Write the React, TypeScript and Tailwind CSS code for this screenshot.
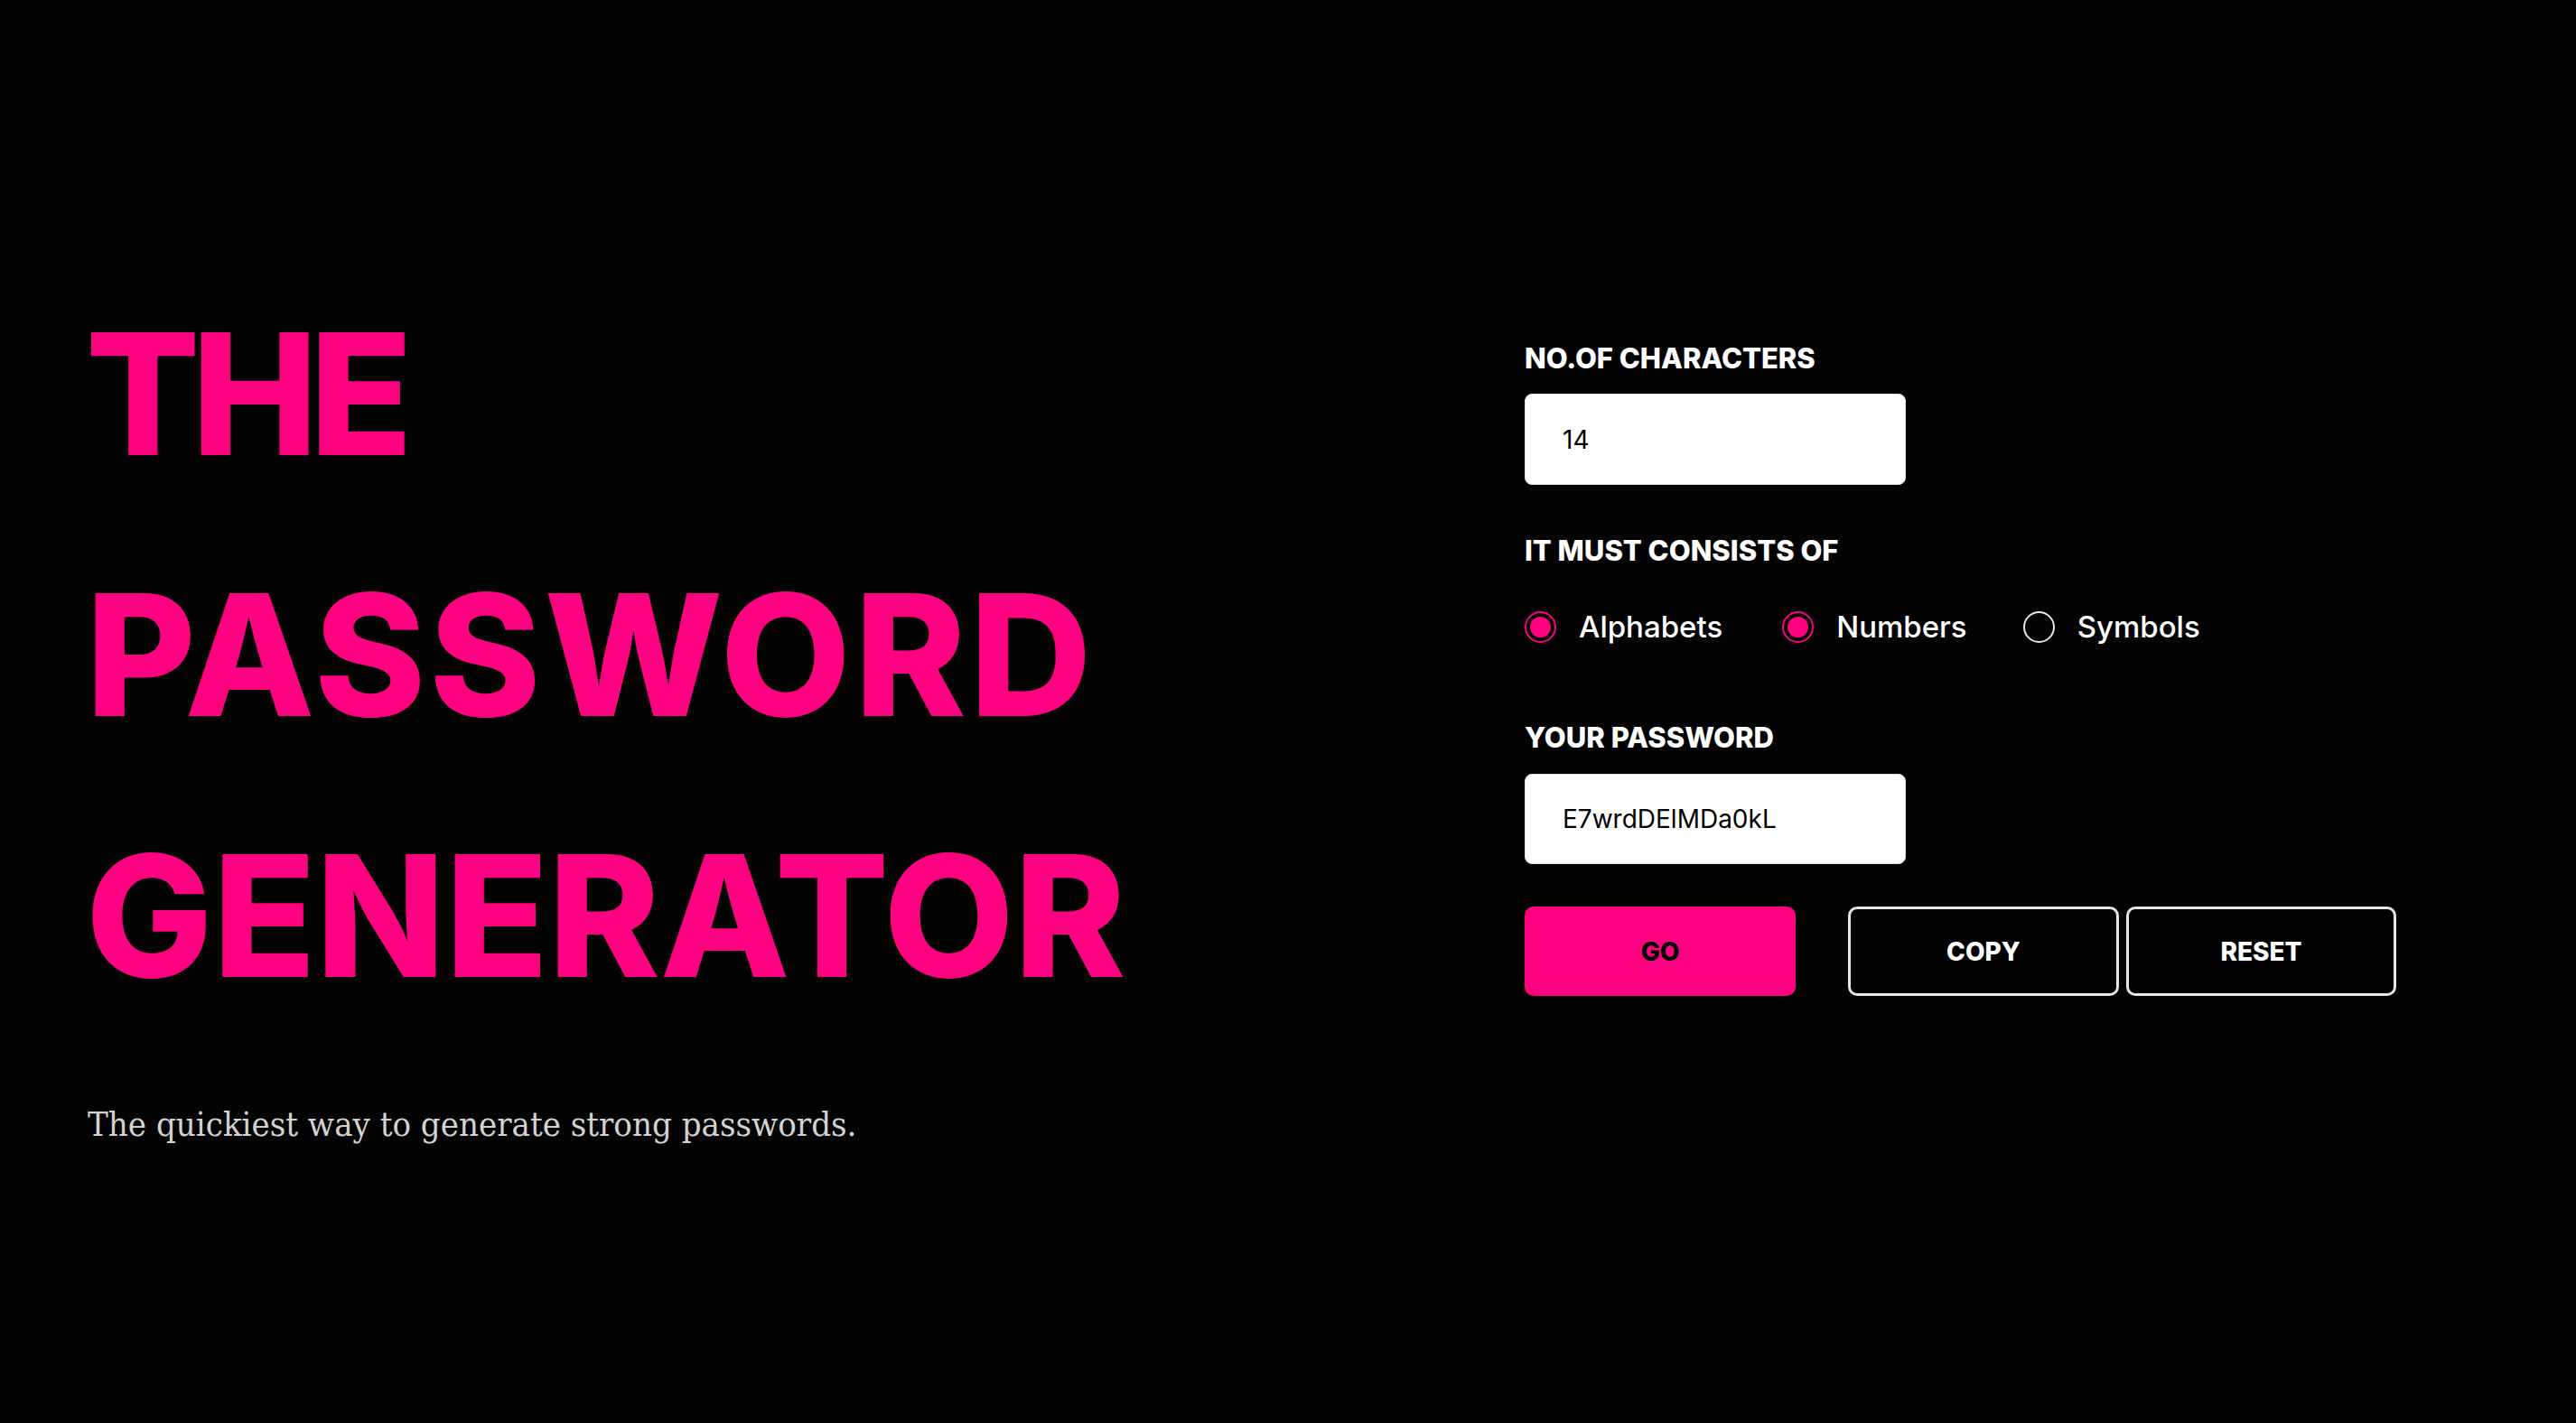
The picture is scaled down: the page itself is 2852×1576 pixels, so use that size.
import { useState } from "react";

const PINK = "#ff0080";

type Option = { label: string; checked: boolean };

function Radio({
  label,
  checked,
  onClick,
  className,
}: Option & { onClick: () => void; className?: string }) {
  return (
    <button type="button" onClick={onClick} className={"flex items-center gap-[25px] " + (className ?? "")}>
      <span
        className={
          checked
            ? "flex h-[35px] w-[35px] items-center justify-center rounded-full border-[2px] border-[#ff0080]"
            : "flex h-[35px] w-[35px] items-center justify-center rounded-full border-[2px] border-[#e6e6e6]"
        }
      >
        {checked && <span className="h-[23px] w-[23px] rounded-full bg-[#ff0080]" />}
      </span>
      <span className="text-[33px] font-medium leading-[48px] text-white">{label}</span>
    </button>
  );
}

export default function App() {
  const [length, setLength] = useState("14");
  const [password] = useState("E7wrdDElMDa0kL");
  const [opts, setOpts] = useState<Option[]>([
    { label: "Alphabets", checked: true },
    { label: "Numbers", checked: true },
    { label: "Symbols", checked: false },
  ]);

  const toggle = (i: number) =>
    setOpts(opts.map((o, j) => (j === i ? { ...o, checked: !o.checked } : o)));

  const gaps = ["", "ml-[66px]", "ml-[62px]"];

  return (
    <div className="flex h-[1576px] w-full items-start bg-[#030304] font-['Inter',sans-serif]">
      {/* left: title */}
      <div className="w-[1688px] shrink-0 pl-[95px] pt-[292px]">
        <h1 className="text-[187px] font-extrabold leading-[289px] text-[#ff0080]">
          <span className="block tracking-[-0.05em]">THE</span>
          <span className="block tracking-[0.02em]">PASSWORD</span>
          <span className="block">GENERATOR</span>
        </h1>
        <p className="mt-[62px] pl-[2px] font-['DejaVu_Serif_Condensed','DejaVu_Serif',serif] text-[38px] leading-[48px] text-[#d2d2d2] font-stretch-condensed">
          The quickiest way to generate strong passwords.
        </p>
      </div>

      {/* right: form */}
      <div className="flex flex-col pt-[373px]">
        <label className="text-[31px] font-extrabold leading-[48px] text-white">
          NO.OF CHARACTERS
        </label>
        <input
          value={length}
          onChange={(e) => setLength(e.target.value)}
          className="mt-[15px] h-[101px] w-[422px] rounded-[8px] border border-[#e2e2e2] bg-white px-[41px] text-[28px] text-black outline-none"
        />

        <label className="mt-[49px] text-[31px] font-extrabold leading-[48px] text-white">
          IT MUST CONSISTS OF
        </label>
        <div className="mt-[36px] flex items-center">
          {opts.map((o, i) => (
            <Radio key={o.label} {...o} className={gaps[i]} onClick={() => toggle(i)} />
          ))}
        </div>

        <label className="mt-[75px] text-[31px] font-extrabold leading-[48px] text-white">
          YOUR PASSWORD
        </label>
        <input
          readOnly
          value={password}
          className="mt-[16px] h-[100px] w-[422px] rounded-[8px] border border-[#e2e2e2] bg-white px-[41px] text-[28px] text-black outline-none"
        />

        <div className="mt-[47px] flex items-center">
          <button
            className="h-[99px] w-[300px] rounded-[10px] text-[28px] font-extrabold text-black"
            style={{ backgroundColor: PINK }}
          >
            GO
          </button>
          <button className="ml-[58px] h-[99px] w-[300px] rounded-[10px] border-[3px] border-[#e6e6e6] bg-black text-[28px] font-extrabold text-white">
            COPY
          </button>
          <button className="ml-[8px] h-[99px] w-[299px] rounded-[10px] border-[3px] border-[#e6e6e6] bg-black text-[28px] font-extrabold text-white">
            RESET
          </button>
        </div>
      </div>
    </div>
  );
}
